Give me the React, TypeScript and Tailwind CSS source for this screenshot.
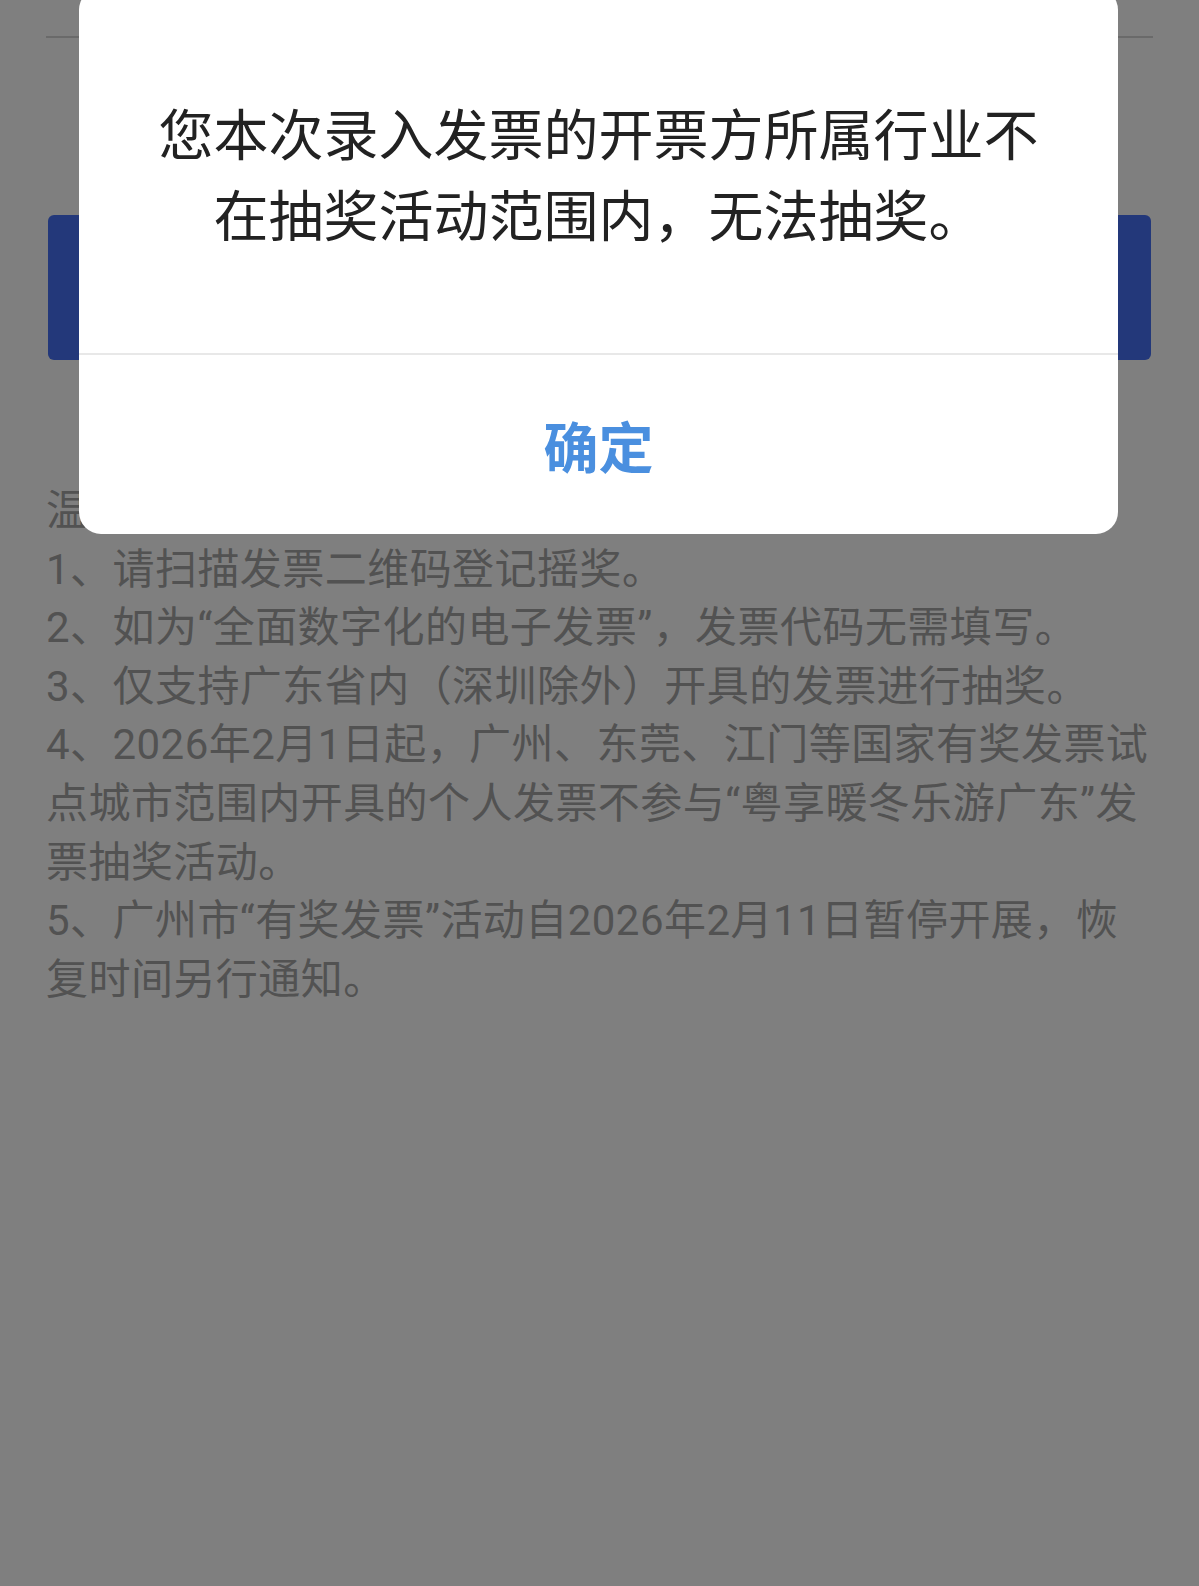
export default function App() {
  const font = { fontFamily: 'Roboto, "Noto Sans CJK SC", sans-serif' };

  return (
    <div className="relative min-h-[1586px] bg-white px-[46px]" style={font}>
      {/* 顶部输入框下划线 */}
      <div className="pt-[36px]">
        <div className="h-[2px] bg-[#d4d4d4]" />
      </div>

      {/* 提交按钮（被弹窗遮住） */}
      <button className="mx-[2px] mt-[177px] flex h-[145px] w-[calc(100%-4px)] items-center justify-center rounded-[6px] bg-[#4670f4] text-[44px] text-white">
        立即登记
      </button>

      {/* 温馨提示 */}
      <div className="mt-[122px] text-[42px] leading-[58.6px] tracking-[0.45px] text-[#a4a4a4]">
        <p>温馨提示：</p>
        <p>1、请扫描发票二维码登记摇奖。</p>
        <p>2、如为“全面数字化的电子发票”，发票代码无需填写。</p>
        <p>3、仅支持广东省内（深圳除外）开具的发票进行抽奖。</p>
        <p>
          4、2026年2月1日起，广州、东莞、江门等国家有奖发票试
          <br />
          点城市范围内开具的个人发票不参与“粤享暖冬乐游广东”发
          <br />
          票抽奖活动。
        </p>
        <p>
          5、广州市“有奖发票”活动自2026年2月11日暂停开展，恢
          <br />
          复时间另行通知。
        </p>
      </div>

      {/* 遮罩 */}
      <div className="fixed inset-0 bg-black/50" />

      {/* 弹窗 */}
      <div className="fixed left-[79px] top-[-12px] w-[1039px] overflow-hidden rounded-[22px] bg-white">
        <div
          className="px-[70px] pt-[103px] pb-[100px] text-center text-[55px] leading-[81px] text-[#222222]"
          style={{ fontFamily: '"Noto Sans CJK SC", sans-serif' }}
        >
          您本次录入发票的开票方所属行业不在抽奖活动范围内，无法抽奖。
        </div>
        <div className="h-[2px] bg-[#e8e8e8]" />
        <button
          className="flex h-[179px] w-full items-center justify-center text-[55px] font-bold text-[#4a8fdf]"
          style={{ fontFamily: '"Noto Sans CJK SC", sans-serif' }}
        >
          确定
        </button>
      </div>
    </div>
  );
}
